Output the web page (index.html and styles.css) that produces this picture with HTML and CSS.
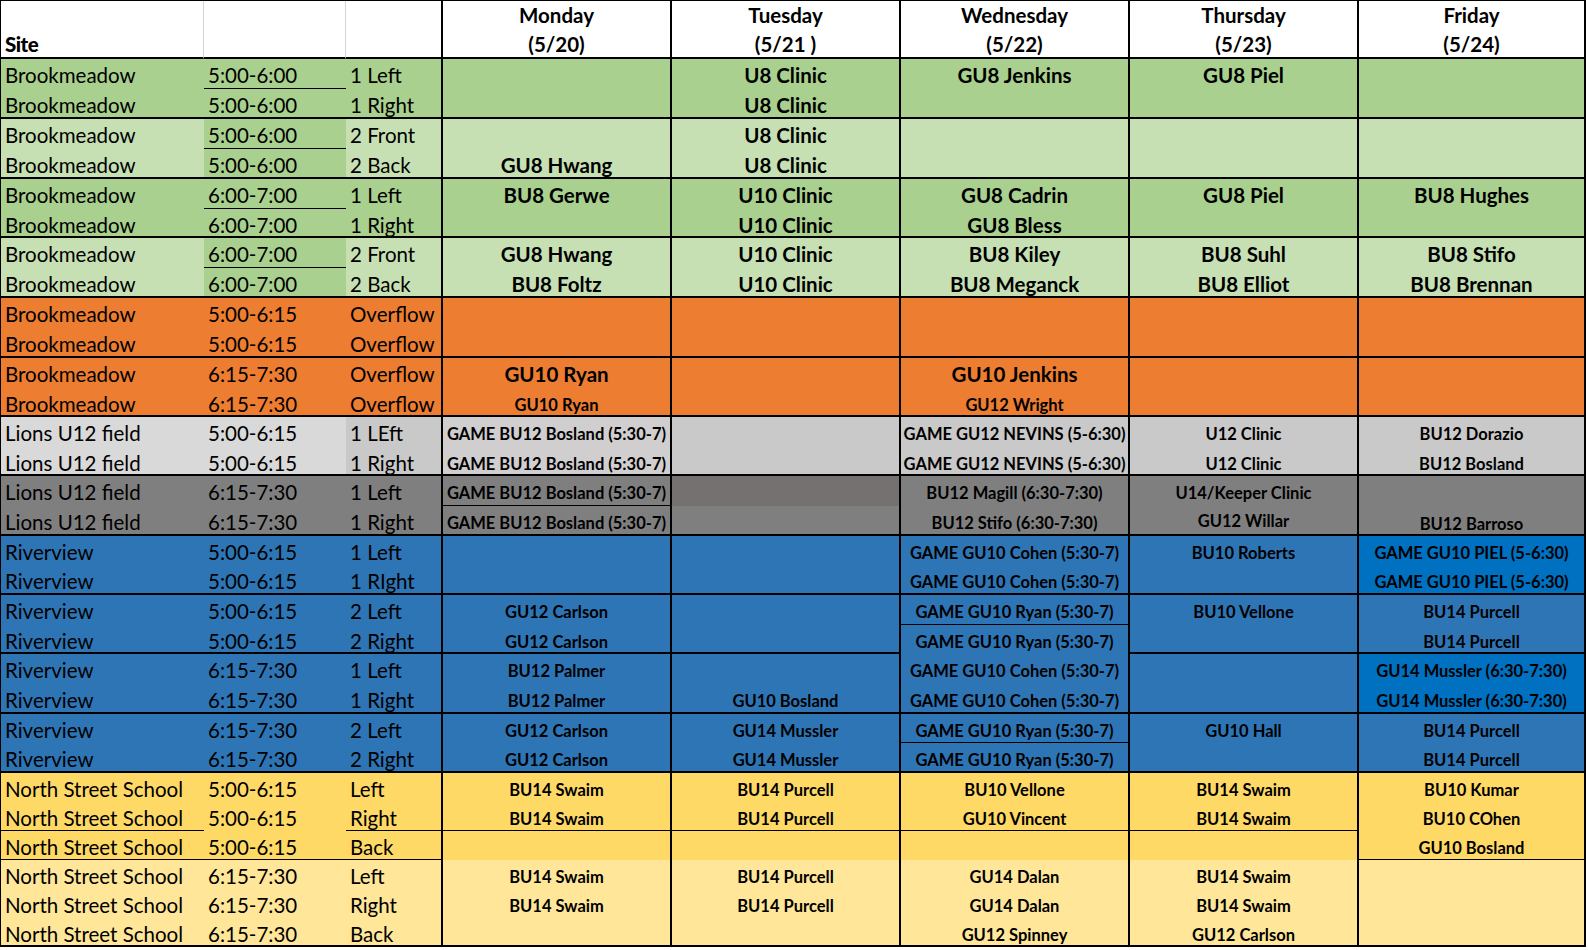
FILE: index.html
```html
<!DOCTYPE html>
<html>
<head>
<meta charset="utf-8">
<link rel="stylesheet" href="styles.css">
</head>
<body>
<div class="sheet">
  <div class="row hdr">
    <div class="hs">Site</div><div class="hg"></div><div></div>
    <div class="d">Monday<br>(5/20)</div>
    <div class="d">Tuesday<br>(5/21 )</div>
    <div class="d">Wednesday<br>(5/22)</div>
    <div class="d">Thursday<br>(5/23)</div>
    <div class="d f">Friday<br>(5/24)</div>
  </div>

  <div class="row g1"><div>Brookmeadow</div><div class="t">5:00-6:00</div><div>1 Left</div><div class="d"></div><div class="d">U8 Clinic</div><div class="d">GU8 Jenkins</div><div class="d">GU8 Piel</div><div class="d f"></div></div>
  <div class="row g1 k"><div>Brookmeadow</div><div>5:00-6:00</div><div>1 Right</div><div class="d"></div><div class="d">U8 Clinic</div><div class="d"></div><div class="d"></div><div class="d f"></div></div>

  <div class="row g2"><div>Brookmeadow</div><div class="g1 t">5:00-6:00</div><div>2 Front</div><div class="d"></div><div class="d">U8 Clinic</div><div class="d"></div><div class="d"></div><div class="d f"></div></div>
  <div class="row g2 k"><div>Brookmeadow</div><div class="g1">5:00-6:00</div><div>2 Back</div><div class="d">GU8 Hwang</div><div class="d">U8 Clinic</div><div class="d"></div><div class="d"></div><div class="d f"></div></div>

  <div class="row g1"><div>Brookmeadow</div><div class="t">6:00-7:00</div><div>1 Left</div><div class="d">BU8 Gerwe</div><div class="d">U10 Clinic</div><div class="d">GU8 Cadrin</div><div class="d">GU8 Piel</div><div class="d f">BU8 Hughes</div></div>
  <div class="row g1 k h29"><div>Brookmeadow</div><div>6:00-7:00</div><div>1 Right</div><div class="d"></div><div class="d">U10 Clinic</div><div class="d">GU8 Bless</div><div class="d"></div><div class="d f"></div></div>

  <div class="row g2"><div>Brookmeadow</div><div class="g1 t">6:00-7:00</div><div>2 Front</div><div class="d">GU8 Hwang</div><div class="d">U10 Clinic</div><div class="d">BU8 Kiley</div><div class="d">BU8 Suhl</div><div class="d f">BU8 Stifo</div></div>
  <div class="row g2 k"><div>Brookmeadow</div><div class="g1">6:00-7:00</div><div>2 Back</div><div class="d">BU8 Foltz</div><div class="d">U10 Clinic</div><div class="d">BU8 Meganck</div><div class="d">BU8 Elliot</div><div class="d f">BU8 Brennan</div></div>

  <div class="row or"><div>Brookmeadow</div><div>5:00-6:15</div><div>Overflow</div><div class="d"></div><div class="d"></div><div class="d"></div><div class="d"></div><div class="d f"></div></div>
  <div class="row or k"><div>Brookmeadow</div><div>5:00-6:15</div><div>Overflow</div><div class="d"></div><div class="d"></div><div class="d"></div><div class="d"></div><div class="d f"></div></div>

  <div class="row or"><div>Brookmeadow</div><div>6:15-7:30</div><div>Overflow</div><div class="d">GU10 Ryan</div><div class="d"></div><div class="d">GU10 Jenkins</div><div class="d"></div><div class="d f"></div></div>
  <div class="row or k s h29"><div>Brookmeadow</div><div>6:15-7:30</div><div>Overflow</div><div class="d">GU10 Ryan</div><div class="d"></div><div class="d">GU12 Wright</div><div class="d"></div><div class="d f"></div></div>

  <div class="row lg s"><div>Lions U12 field</div><div>5:00-6:15</div><div class="mg">1 LEft</div><div class="d gm">GAME BU12 Bosland (5:30-7)</div><div class="d mg"></div><div class="d mg">GAME GU12 NEVINS (5-6:30)</div><div class="d mg">U12 Clinic</div><div class="d f mg">BU12 Dorazio</div></div>
  <div class="row lg k s h29"><div>Lions U12 field</div><div>5:00-6:15</div><div class="mg">1 Right</div><div class="d gm">GAME BU12 Bosland (5:30-7)</div><div class="d mg"></div><div class="d mg">GAME GU12 NEVINS (5-6:30)</div><div class="d mg">U12 Clinic</div><div class="d f mg">BU12 Bosland</div></div>

  <div class="row dg s"><div>Lions U12 field</div><div>6:15-7:30</div><div>1 Left</div><div class="d t">GAME BU12 Bosland (5:30-7)</div><div class="d dk"></div><div class="d">BU12 Magill (6:30-7:30)</div><div class="d">U14/Keeper Clinic</div><div class="d f"></div></div>
  <div class="row dg k s"><div>Lions U12 field</div><div>6:15-7:30</div><div>1 Right</div><div class="d">GAME BU12 Bosland (5:30-7)</div><div class="d"></div><div class="d">BU12 Stifo (6:30-7:30)</div><div class="d up">GU12 Willar</div><div class="d f dn">BU12 Barroso</div></div>

  <div class="row bl s h29"><div>Riverview</div><div>5:00-6:15</div><div>1 Left</div><div class="d"></div><div class="d"></div><div class="d">GAME GU10 Cohen (5:30-7)</div><div class="d">BU10 Roberts</div><div class="d f bb">GAME GU10 PIEL (5-6:30)</div></div>
  <div class="row bl k s"><div>Riverview</div><div>5:00-6:15</div><div>1 RIght</div><div class="d"></div><div class="d"></div><div class="d">GAME GU10 Cohen (5:30-7)</div><div class="d"></div><div class="d f bb">GAME GU10 PIEL (5-6:30)</div></div>

  <div class="row bl s"><div>Riverview</div><div>5:00-6:15</div><div>2 Left</div><div class="d">GU12 Carlson</div><div class="d"></div><div class="d t">GAME GU10 Ryan (5:30-7)</div><div class="d">BU10 Vellone</div><div class="d f">BU14 Purcell</div></div>
  <div class="row bl k s h29"><div>Riverview</div><div>5:00-6:15</div><div>2 Right</div><div class="d">GU12 Carlson</div><div class="d"></div><div class="d nb">GAME GU10 Ryan (5:30-7)</div><div class="d"></div><div class="d f">BU14 Purcell</div></div>

  <div class="row bl s"><div>Riverview</div><div>6:15-7:30</div><div>1 Left</div><div class="d">BU12 Palmer</div><div class="d"></div><div class="d">GAME GU10 Cohen (5:30-7)</div><div class="d"></div><div class="d f bb">GU14 Mussler (6:30-7:30)</div></div>
  <div class="row bl k s"><div>Riverview</div><div>6:15-7:30</div><div>1 Right</div><div class="d">BU12 Palmer</div><div class="d">GU10 Bosland</div><div class="d">GAME GU10 Cohen (5:30-7)</div><div class="d"></div><div class="d f bb">GU14 Mussler (6:30-7:30)</div></div>

  <div class="row bl s h29"><div>Riverview</div><div>6:15-7:30</div><div>2 Left</div><div class="d">GU12 Carlson</div><div class="d">GU14 Mussler</div><div class="d t">GAME GU10 Ryan (5:30-7)</div><div class="d">GU10 Hall</div><div class="d f">BU14 Purcell</div></div>
  <div class="row bl k s"><div>Riverview</div><div>6:15-7:30</div><div>2 Right</div><div class="d">GU12 Carlson</div><div class="d">GU14 Mussler</div><div class="d">GAME GU10 Ryan (5:30-7)</div><div class="d"></div><div class="d f">BU14 Purcell</div></div>

  <div class="row y1 s h29"><div>North Street School</div><div>5:00-6:15</div><div>Left</div><div class="d">BU14 Swaim</div><div class="d">BU14 Purcell</div><div class="d">BU10 Vellone</div><div class="d">BU14 Swaim</div><div class="d f">BU10 Kumar</div></div>
  <div class="row y1 s h29"><div class="t">North Street School</div><div>5:00-6:15</div><div class="t">Right</div><div class="d t">BU14 Swaim</div><div class="d t">BU14 Purcell</div><div class="d t">GU10 Vincent</div><div class="d t">BU14 Swaim</div><div class="d f">BU10 COhen</div></div>
  <div class="row y1 s h29"><div class="t">North Street School</div><div class="t">5:00-6:15</div><div class="t">Back</div><div class="d"></div><div class="d"></div><div class="d"></div><div class="d"></div><div class="d f t">GU10 Bosland</div></div>

  <div class="row y2 s h29"><div>North Street School</div><div>6:15-7:30</div><div>Left</div><div class="d">BU14 Swaim</div><div class="d">BU14 Purcell</div><div class="d">GU14 Dalan</div><div class="d">BU14 Swaim</div><div class="d f"></div></div>
  <div class="row y2 s h29"><div>North Street School</div><div>6:15-7:30</div><div>Right</div><div class="d">BU14 Swaim</div><div class="d">BU14 Purcell</div><div class="d">GU14 Dalan</div><div class="d">BU14 Swaim</div><div class="d f"></div></div>
  <div class="row y2 k s h29"><div>North Street School</div><div>6:15-7:30</div><div>Back</div><div class="d"></div><div class="d"></div><div class="d">GU12 Spinney</div><div class="d">GU12 Carlson</div><div class="d f"></div></div>
</div>
</body>
</html>
```

FILE: styles.css
```css
* { box-sizing: border-box; }

body {
  margin: 0;
  background: #ffffff;
  color: #000000;
  font-family: "Lato", "Liberation Sans", sans-serif;
}

.sheet {
  display: flex;
  flex-direction: column;
  width: 1586px;
  border-top: 1px solid #000;
  border-left: 1px solid #000;
}

.row {
  display: grid;
  grid-template-columns: 203px 142px 95px 229px 229px 229px 229px 229px;
  grid-template-rows: minmax(0, 1fr);
  height: 30px;
  flex: none;
  font-size: 20.5px;
  line-height: 29px;
}

.row.h29 { height: 29px; }

.row > div {
  min-height: 0;
  white-space: nowrap;
  overflow: visible;
  padding-top: 2px;
}

.row > div:nth-child(-n+3) {
  padding-left: 4px;
}

.d {
  border-left: 2px solid #000;
  text-align: center;
  font-weight: 700;
}

.f { border-right: 2px solid #000; }

/* header */
.hdr {
  height: 58px;
  background: #fff;
}
.hdr > div {
  border-bottom: 2px solid #000;
  padding-top: 0;
}
.hdr .hs {
  border-right: 1px solid #d4d4d4;
  font-weight: 900;
  padding-top: 29px;
  letter-spacing: -0.5px;
}
.hdr .hg {
  border-right: 1px solid #d4d4d4;
}

/* borders */
.k > div { border-bottom: 2px solid #000; }
.row > .t { border-bottom: 1px solid #000; }
.row > .nb { border-bottom: none; }

/* small bold day text */
.s > .d {
  font-size: 16.5px;
  padding-top: 3px;
}
.s > .up { padding-top: 1px; }
.s > .dn { padding-top: 4px; }

/* fills */
.g1 { background: #a9d08e; }
.g2 { background: #c6e0b4; }
.or { background: #ed7d31; }
.lg { background: #d9d9d9; }
.mg { background: #c9c9c9; }
.gm { background: #d0cece; }
.dg { background: #7f7f7f; }
.dk { background: #767171; }
.bl { background: #2e75b6; }
.bb { background: #0070c0; }
.y1 { background: #ffd966; }
.y2 { background: #ffe699; }
```
